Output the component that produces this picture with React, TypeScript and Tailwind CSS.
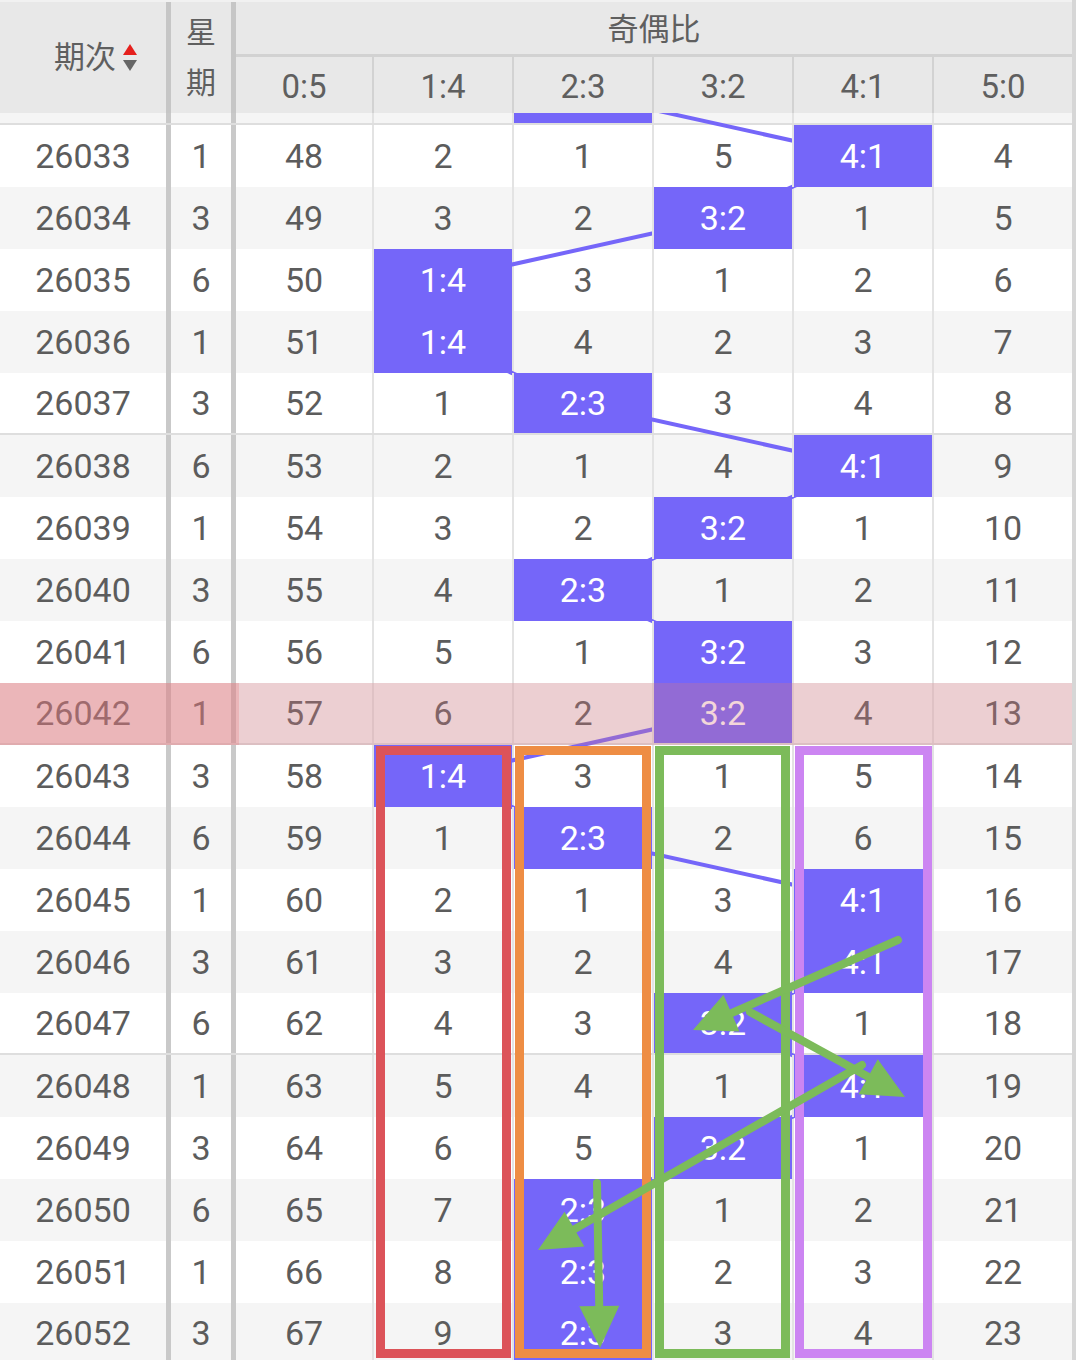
import React from 'react'

// 奇偶比 走势表
const COLS = ['0:5', '1:4', '2:3', '3:2', '4:1', '5:0']
const COL_LEFT = [236, 372, 512, 652, 792, 932]
const COL_W = [136, 140, 140, 140, 140, 140]
const ROW_H = 62

type Row = { issue: number; week: number; vals: number[]; hit: number }

// first row sits mostly under the header (table is scrolled)
const rows: Row[] = [
  { issue: 26032, week: 6, vals: [47, 1, 0, 4, 8, 3], hit: 2 },
  { issue: 26033, week: 1, vals: [48, 2, 1, 5, 0, 4], hit: 4 },
  { issue: 26034, week: 3, vals: [49, 3, 2, 0, 1, 5], hit: 3 },
  { issue: 26035, week: 6, vals: [50, 0, 3, 1, 2, 6], hit: 1 },
  { issue: 26036, week: 1, vals: [51, 0, 4, 2, 3, 7], hit: 1 },
  { issue: 26037, week: 3, vals: [52, 1, 0, 3, 4, 8], hit: 2 },
  { issue: 26038, week: 6, vals: [53, 2, 1, 4, 0, 9], hit: 4 },
  { issue: 26039, week: 1, vals: [54, 3, 2, 0, 1, 10], hit: 3 },
  { issue: 26040, week: 3, vals: [55, 4, 0, 1, 2, 11], hit: 2 },
  { issue: 26041, week: 6, vals: [56, 5, 1, 0, 3, 12], hit: 3 },
  { issue: 26042, week: 1, vals: [57, 6, 2, 0, 4, 13], hit: 3 },
  { issue: 26043, week: 3, vals: [58, 0, 3, 1, 5, 14], hit: 1 },
  { issue: 26044, week: 6, vals: [59, 1, 0, 2, 6, 15], hit: 2 },
  { issue: 26045, week: 1, vals: [60, 2, 1, 3, 0, 16], hit: 4 },
  { issue: 26046, week: 3, vals: [61, 3, 2, 4, 0, 17], hit: 4 },
  { issue: 26047, week: 6, vals: [62, 4, 3, 0, 1, 18], hit: 3 },
  { issue: 26048, week: 1, vals: [63, 5, 4, 1, 0, 19], hit: 4 },
  { issue: 26049, week: 3, vals: [64, 6, 5, 0, 1, 20], hit: 3 },
  { issue: 26050, week: 6, vals: [65, 7, 0, 1, 2, 21], hit: 2 },
  { issue: 26051, week: 1, vals: [66, 8, 0, 2, 3, 22], hit: 2 },
  { issue: 26052, week: 3, vals: [67, 9, 0, 3, 4, 23], hit: 2 },
]

const HIGHLIGHT = 26042

function SortIcon() {
  return (
    <svg width="16" height="30" viewBox="0 0 16 30" className="ml-[6px]">
      <path d="M8 1 L15 12 L1 12 Z" fill="#e5201d" />
      <path d="M1 17 L15 17 L8 28 Z" fill="#666666" />
    </svg>
  )
}

function Header() {
  return (
    <div className="flex h-[113px] bg-[#e8e8e8] text-[#5f5f5f] border-t-2 border-[#f1f1f1] leading-none">
      <div className="w-[166px] flex items-center justify-center pl-[26px] text-[31px]">
        <span>期次</span>
        <SortIcon />
      </div>
      <div className="w-[5px] bg-[#c6c6c6]" />
      <div className="w-[60px] flex flex-col items-center justify-center gap-[20px] text-[30px]">
        <span>星</span>
        <span>期</span>
      </div>
      <div className="w-[5px] bg-[#c6c6c6]" />
      <div className="flex flex-col w-[836px]">
        <div className="h-[55px] flex items-center justify-center pt-[3px] text-[31px] border-b-[3px] border-[#d2d2d2]">
          奇偶比
        </div>
        <div className="flex-1 grid grid-cols-[136px_140px_140px_140px_140px_140px]">
          {COLS.map((c, i) => (
            <div
              key={c}
              className={`flex items-center justify-center pt-[2px] text-[33px] ${i > 0 ? 'border-l-2 border-[#d2d2d2]' : ''}`}
            >
              {c}
            </div>
          ))}
        </div>
      </div>
    </div>
  )
}

function BodyRow({ row, index, hidden }: { row: Row; index: number; hidden?: boolean }) {
  const stripe = index % 2 === 0 ? 'bg-[#f5f5f5]' : 'bg-white'
  const divider = index % 5 === 0 ? 'border-b-2 border-[#dedede]' : ''
  return (
    <div
      className={`grid grid-cols-[166px_5px_60px_5px_136px_140px_140px_140px_140px_140px] h-[62px] ${stripe} ${divider} text-[34px] leading-none text-[#5c5c5c]`}
    >
      <div className="flex items-center justify-center">{hidden ? null : row.issue}</div>
      <div className="bg-[#c9c9c9]" />
      <div className="flex items-center justify-center">{hidden ? null : row.week}</div>
      <div className="bg-[#c9c9c9]" />
      {row.vals.map((v, i) => {
        const border = i > 0 ? 'border-l-2 border-[#e3e3e3]' : ''
        if (i === row.hit) {
          return (
            <div
              key={i}
              className={`relative z-[2] flex items-center justify-center bg-[#7566f9] text-white ${border}`}
            >
              {hidden ? null : COLS[i]}
            </div>
          )
        }
        return (
          <div key={i} className={`flex items-center justify-center ${border}`}>
            {hidden ? null : v}
          </div>
        )
      })}
    </div>
  )
}

function colCenter(i: number) {
  return COL_LEFT[i] + COL_W[i] / 2
}

function Connectors() {
  const segs = rows.slice(1).map((r, k) => {
    const prev = rows[k]
    return {
      x1: colCenter(prev.hit),
      y1: k * ROW_H + ROW_H / 2,
      x2: colCenter(r.hit),
      y2: (k + 1) * ROW_H + ROW_H / 2,
    }
  })
  return (
    <svg
      className="absolute left-0 top-0 z-[1] pointer-events-none"
      width={1076}
      height={rows.length * ROW_H}
    >
      {segs.map((s, i) => (
        <line key={i} {...s} stroke="#7566f9" strokeWidth={4} />
      ))}
    </svg>
  )
}

function Arrow({ x1, y1, x2, y2 }: { x1: number; y1: number; x2: number; y2: number }) {
  const dx = x2 - x1
  const dy = y2 - y1
  const len = Math.hypot(dx, dy)
  const ux = dx / len
  const uy = dy / len
  const L = 42
  const W = 20
  const bx = x2 - ux * L
  const by = y2 - uy * L
  const pts = `${x2},${y2} ${bx - uy * W},${by + ux * W} ${bx + uy * W},${by - ux * W}`
  return (
    <g>
      <line
        x1={x1}
        y1={y1}
        x2={x2 - ux * 30}
        y2={y2 - uy * 30}
        stroke="#7cbb5a"
        strokeWidth={8}
        strokeLinecap="round"
      />
      <polygon points={pts} fill="#7cbb5a" />
    </g>
  )
}

function Annotations() {
  return (
    <svg className="absolute left-0 top-0 z-[5] pointer-events-none" width={1076} height={1360}>
      <rect x={380.5} y={750.5} width={126} height={603} fill="none" stroke="#dc5359" strokeWidth={9} />
      <rect x={519.5} y={750.5} width={127} height={603} fill="none" stroke="#ee8d44" strokeWidth={9} />
      <rect x={659.5} y={750.5} width={126} height={603} fill="none" stroke="#7cbb5a" strokeWidth={9} />
      <rect x={799.5} y={750.5} width={128} height={603} fill="none" stroke="#cc85f2" strokeWidth={9} />
      <Arrow x1={898} y1={940} x2={693} y2={1030} />
      <Arrow x1={750} y1={1012} x2={905} y2={1097} />
      <Arrow x1={862} y1={1065} x2={538} y2={1250} />
      <Arrow x1={597} y1={1183} x2={600} y2={1348} />
    </svg>
  )
}

export default function App() {
  const hi = rows.findIndex(r => r.issue === HIGHLIGHT)
  return (
    <div className="relative w-[1076px] h-[1360px] overflow-hidden bg-white font-['Roboto','Noto_Sans_CJK_SC',sans-serif] border-r-4 border-[#d6d6d6]">
      <Header />
      <div className="relative h-[1247px] overflow-hidden">
        <div className="relative mt-[-50px]">
          {rows.map((r, i) => (
            <BodyRow key={r.issue} row={r} index={i} hidden={i === 0} />
          ))}
          <Connectors />
          {hi >= 0 && (
            <div
              className="absolute left-0 z-[3] flex h-[62px] w-[1076px] pointer-events-none"
              style={{ top: hi * ROW_H }}
            >
              <div className="w-[239px] bg-[rgba(225,120,125,0.5)]" />
              <div className="flex-1 bg-[rgba(215,120,128,0.3)]" />
            </div>
          )}
        </div>
      </div>
      <Annotations />
    </div>
  )
}
